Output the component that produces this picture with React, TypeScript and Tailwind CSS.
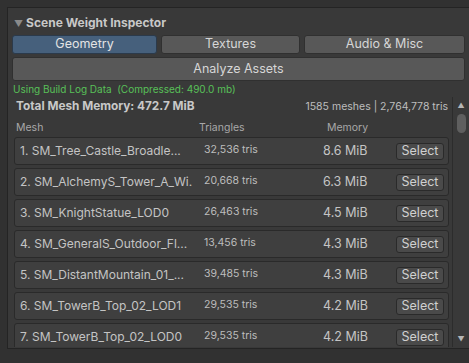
const rows = [
  { name: '1. SM_Tree_Castle_Broadle...', tris: '32,536 tris', mem: '8.6 MiB' },
  { name: '2. SM_AlchemyS_Tower_A_Wi.', tris: '20,668 tris', mem: '6.3 MiB' },
  { name: '3. SM_KnightStatue_LOD0', tris: '26,463 tris', mem: '4.5 MiB' },
  { name: '4. SM_GeneralS_Outdoor_Fl...', tris: '13,456 tris', mem: '4.3 MiB' },
  { name: '5. SM_DistantMountain_01_...', tris: '39,485 tris', mem: '4.3 MiB' },
  { name: '6. SM_TowerB_Top_02_LOD1', tris: '29,535 tris', mem: '4.2 MiB' },
  { name: '7. SM_TowerB_Top_02_LOD0', tris: '29,535 tris', mem: '4.2 MiB' },
];

const tabs = ['Geometry', 'Textures', 'Audio & Misc'];

export default function App() {
  return (
    <div
      className="w-[469px] h-[363px] overflow-hidden bg-[#313131] pt-[7px] pl-[7px] text-[#c4c4c4]"
      style={{ fontFamily: 'Inter, "Noto Sans", sans-serif' }}
    >
      <div className="h-[342px] border border-r-0 border-[#242424] bg-[#393939] flex flex-col">
        {/* foldout header */}
        <div className="flex items-center h-[26px] pl-[6px] pt-[4px]">
          <span className="text-[9px] text-[#8a8a8a] mr-[3px] leading-none">▼</span>
          <span className="text-[12px] font-bold text-[#c8c8c8]">Scene Weight Inspector</span>
        </div>

        <div className="pl-[4px] pr-[4px]">
          <div className="flex gap-[4px] mt-[1px]">
            {tabs.map((t, i) => (
              <div
                key={t}
                className={
                  'h-[19px] rounded-[3px] border flex items-center justify-center text-[12.5px] ' +
                  (i === 0
                    ? 'w-[145px] bg-[#46607c] border-[#2b3a4b] text-[#e4e4e4]'
                    : i === 1
                    ? 'w-[139px] bg-[#585858] border-[#303030] text-[#d6d6d6]'
                    : 'flex-1 bg-[#585858] border-[#303030] text-[#d6d6d6]')
                }
              >
                {t}
              </div>
            ))}
          </div>
          <div className="mt-[3px] h-[24px] rounded-[3px] border border-[#303030] bg-[#585858] flex items-center justify-center text-[12.5px] text-[#d6d6d6]">
            Analyze Assets
          </div>
          <div className="mt-[2px] pl-[1px] text-[10px] leading-[13px] text-[#58c058] whitespace-pre">
            Using Build Log Data  (Compressed: 490.0 mb)
          </div>
        </div>

        {/* scroll view */}
        <div className="flex mt-[1px] h-[250px]">
          <div className="flex-1 overflow-hidden">
            <div className="flex items-center justify-between h-[18px] pl-[8px] pr-[4px] mt-[1px]">
              <span className="text-[11.8px] font-bold text-[#c8c8c8]">Total Mesh Memory: 472.7 MiB</span>
              <span className="text-[10.5px] text-[#bdbdbd]">1585 meshes | 2,764,778 tris</span>
            </div>
            <div className="flex items-center h-[18px] mt-[3px] text-[10.5px] text-[#a8a8a8]">
              <span className="w-[191px] pl-[8px]">Mesh</span>
              <span className="w-[128px]">Triangles</span>
              <span>Memory</span>
            </div>
            <div className="flex flex-col gap-[3px] pl-[6px] pr-[3px]">
              {rows.map(r => (
                <div
                  key={r.name}
                  className="h-[28px] shrink-0 rounded-[3px] border border-[#2a2a2a] bg-[#3f3f3f] flex items-center pl-[5px]"
                >
                  <span className="w-[184px] text-[12px] whitespace-nowrap overflow-hidden">{r.name}</span>
                  <span className="w-[119px] text-[10.5px] text-[#bdbdbd] self-start mt-[4px]">{r.tris}</span>
                  <span className="w-[73px] text-[12.5px]">{r.mem}</span>
                  <div className="w-[48px] h-[17px] rounded-[3px] border border-[#2a2a2a] bg-[#4a4a4a] flex items-center justify-center text-[12.5px] text-[#d0d0d0]">
                    Select
                  </div>
                </div>
              ))}
            </div>
          </div>
          {/* scrollbar */}
          <div className="w-[17px] border-l border-[#2c2c2c] flex flex-col items-center">
            <span className="mt-[5px] text-[7px] leading-none text-[#b5b5b5]">▲</span>
            <div className="mt-[5px] w-[9px] h-[19px] rounded-full bg-[#5f5f5f]" />
            <div className="flex-1" />
            <span className="mb-[4px] text-[7px] leading-none text-[#b5b5b5]">▼</span>
          </div>
        </div>
      </div>
    </div>
  );
}
